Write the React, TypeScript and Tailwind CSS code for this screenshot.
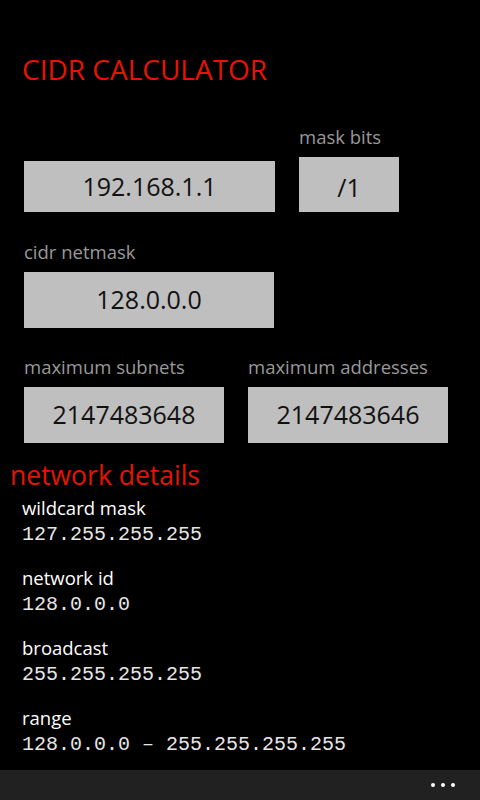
import React from "react";

const sans = { fontFamily: '"Open Sans", "Noto Sans", sans-serif' };

function Field({ label, value, className }: { label?: string; value: string; className: string }) {
  return (
    <div className="flex flex-col">
      {label && <div className="mb-[8px] h-[24px] text-[18.5px] leading-[24px] text-[#999999]">{label}</div>}
      <div className={`flex items-center justify-center bg-[#bfbfbf] text-[25px] text-[#111111] ${className}`}>
        {value}
      </div>
    </div>
  );
}

function Detail({ label, value }: { label: string; value: string }) {
  return (
    <div className="flex flex-col">
      <div className="pl-[22px] text-[18.5px] leading-[24px] text-white">{label}</div>
      <div
        className="mt-[3px] pl-[22px] text-[20px] leading-[24px] text-[#e6e6e6] whitespace-pre"
        style={{ fontFamily: '"Liberation Mono", "Courier New", monospace' }}
      >
        {value}
      </div>
    </div>
  );
}

export default function App() {
  return (
    <div className="flex h-[800px] w-[480px] flex-col overflow-hidden bg-black" style={sans}>
      <div className="flex-1">
        <h1 className="mt-[53px] pl-[22px] text-[28px] leading-[32px] text-[#e51400]">CIDR CALCULATOR</h1>

        <div className="mt-[40px] flex items-end pl-[24px]">
          <Field value="192.168.1.1" className="h-[51px] w-[251px]" />
          <div className="ml-[24px]">
            <Field label="mask bits" value="/1" className="h-[55px] w-[100px] pt-[6px]" />
          </div>
        </div>

        <div className="mt-[28px] pl-[24px]">
          <Field label="cidr netmask" value="128.0.0.0" className="h-[56px] w-[250px]" />
        </div>

        <div className="mt-[27px] flex gap-[24px] pl-[24px]">
          <Field label="maximum subnets" value="2147483648" className="h-[56px] w-[200px]" />
          <Field label="maximum addresses" value="2147483646" className="h-[56px] w-[200px]" />
        </div>

        <h2 className="mt-[16px] pl-[10px] text-[26.5px] leading-[32px] text-[#e51400]">network details</h2>

        <div className="mt-[5px] flex flex-col gap-[19px]">
          <Detail label="wildcard mask" value="127.255.255.255" />
          <Detail label="network id" value="128.0.0.0" />
          <Detail label="broadcast" value="255.255.255.255" />
          <Detail label="range" value="128.0.0.0 – 255.255.255.255" />
        </div>
      </div>

      {/* app bar */}
      <div className="flex h-[30px] items-center justify-end gap-[6px] bg-[#212121] pr-[25px]">
        <span className="h-[4px] w-[4px] rounded-full bg-white" />
        <span className="h-[4px] w-[4px] rounded-full bg-white" />
        <span className="h-[4px] w-[4px] rounded-full bg-white" />
      </div>
    </div>
  );
}
